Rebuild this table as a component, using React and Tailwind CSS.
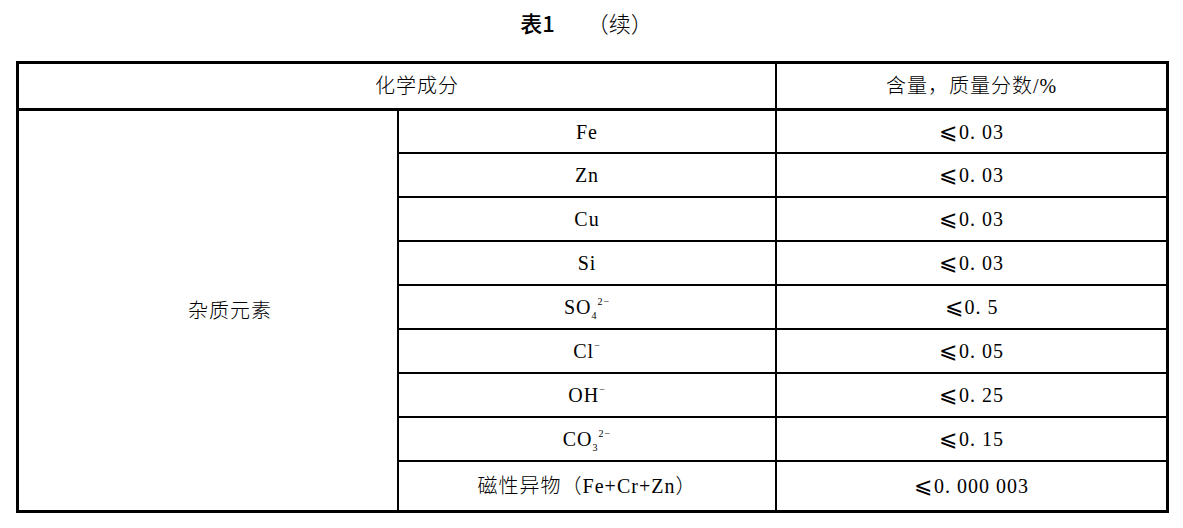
import React from "react";

const serif = { fontFamily: '"Liberation Serif", "Noto Sans CJK SC", serif' };

const rows = [
  { name: "Fe", value: "0.03" },
  { name: "Zn", value: "0.03" },
  { name: "Cu", value: "0.03" },
  { name: "Si", value: "0.03" },
  {
    name: (
      <>
        SO<span className="relative top-[5px] text-[10px]">4</span>
        <span className="relative -top-[9px] text-[10px]">2−</span>
      </>
    ),
    value: "0.5",
  },
  {
    name: (
      <>
        Cl<span className="relative -top-[9px] text-[10px]">−</span>
      </>
    ),
    value: "0.05",
  },
  {
    name: (
      <>
        OH<span className="relative -top-[9px] text-[10px]">−</span>
      </>
    ),
    value: "0.25",
  },
  {
    name: (
      <>
        CO<span className="relative top-[5px] text-[10px]">3</span>
        <span className="relative -top-[9px] text-[10px]">2−</span>
      </>
    ),
    value: "0.15",
  },
  { name: "磁性异物（Fe+Cr+Zn）", value: "0.000 003", last: true },
];

// SimSun-style value: slanted ≤ plus wide period
const Value = ({ v }) => {
  const [a, b] = v.split(".");
  return (
    <span className="flex items-baseline">
      <span
        style={{ fontFamily: '"DejaVu Sans ExtraLight", "DejaVu Sans", sans-serif' }}
        className="text-[22px] leading-none font-extralight mr-[1px]"
      >
        ⩽
      </span>
      <span>{a}</span>
      <span className="mr-[6px]">.</span>
      <span>{b}</span>
    </span>
  );
};

export default function App() {
  return (
    <div className="w-[1183px] h-[528px] bg-white text-black" style={serif}>
      <div className="flex justify-center pt-[9px] pr-[10px] h-[61px]">
        <div className="flex items-start text-[22px] leading-[26px]">
          <span style={{ fontFamily: '"Noto Sans CJK SC", sans-serif' }} className="font-medium">
            表1
          </span>
          <span className="ml-[32px] font-light" style={{ fontFamily: '"Noto Sans CJK SC", sans-serif' }}>
            （续）
          </span>
        </div>
      </div>

      <div className="ml-[16px] w-[1153px] border-[3px] border-black text-[20px] tracking-[1px] font-light">
        <div className="flex h-[47px] border-b-[3px] border-black">
          <div className="w-[758px] flex items-center justify-center pl-[40px] border-r-2 border-black">
            化学成分
          </div>
          <div className="flex-1 flex items-center justify-center">含量，质量分数/%</div>
        </div>

        <div className="flex">
          <div className="w-[380px] flex items-center justify-center pl-[44px] border-r-2 border-black">
            杂质元素
          </div>
          <div className="flex-1 flex flex-col">
            {rows.map((r, i) => (
              <div
                key={i}
                className={
                  r.last
                    ? "flex h-[48px]"
                    : i === 0
                    ? "flex h-[43px] border-b-2 border-black"
                    : "flex h-[44px] border-b-2 border-black"
                }
              >
                <div className="w-[378px] flex items-center justify-center border-r-2 border-black">
                  <span>{r.name}</span>
                </div>
                <div className="flex-1 flex items-center justify-center">
                  <Value v={r.value} />
                </div>
              </div>
            ))}
          </div>
        </div>
      </div>
    </div>
  );
}
